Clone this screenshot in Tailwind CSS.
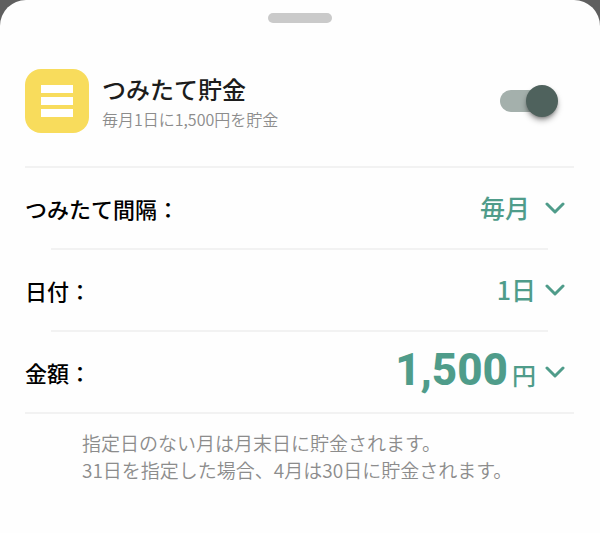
<!DOCTYPE html>
<html lang="ja">
<head>
  <meta charset="UTF-8" />
  <meta name="viewport" content="width=device-width, initial-scale=1.0" />
  <title>つみたて貯金</title>
  <script src="https://cdn.jsdelivr.net/npm/@tailwindcss/browser@4"></script>
</head>
<body class="bg-[#5f5f5f] font-['Noto_Sans_CJK_JP',sans-serif]">
  <main class="flex min-h-screen flex-col rounded-t-[26px] bg-[#fefefe] pt-[13px] pr-[26px] pl-[25px]">
    <!-- Drag handle -->
    <div class="h-[10px] w-16 self-center rounded-full bg-[#cacaca]"></div>

    <!-- Header -->
    <header class="flex items-center border-b-2 border-[#f2f2f2] pt-[46px] pb-[33px]">
      <svg class="size-16 shrink-0" viewBox="0 0 64 64" aria-hidden="true">
        <rect width="64" height="64" rx="16" fill="#f8dc5c" />
        <path d="M16 16h32v8H16zM16 28h32v8H16zM16 40h32v8H16z" fill="#fff" />
      </svg>
      <div class="ml-[13px] flex-1 pt-1">
        <h1 class="text-2xl/8 font-medium text-[#1c1c1c]"><label for="enabled">つみたて貯金</label></h1>
        <p class="text-base/7 font-[350] text-[#8c8c8c]">毎月1日に1,500円を貯金</p>
      </div>
      <span class="mr-4 grid items-center">
        <input id="enabled" type="checkbox" role="switch" checked
               class="peer col-start-1 row-start-1 h-[22px] w-[54px] cursor-pointer appearance-none rounded-full bg-[#d0d0d0] checked:bg-[#a4b0ac]" />
        <span class="pointer-events-none col-start-1 row-start-1 size-8 rounded-full bg-white shadow-md shadow-black/40 peer-checked:ml-[26px] peer-checked:bg-[#4f625d]"></span>
      </span>
    </header>

    <!-- Interval -->
    <div class="flex h-20 items-center justify-between pr-[9px]">
      <label for="interval" class="text-[22px] font-medium text-black">つみたて間隔：</label>
      <span class="grid items-center">
        <select id="interval" class="col-start-1 row-start-1 cursor-pointer appearance-none pr-[35px] text-right text-[25px] font-medium text-[#4f9c8a]">
          <option>毎月</option>
        </select>
        <svg class="pointer-events-none col-start-1 row-start-1 h-3 w-5 justify-self-end" viewBox="0 0 20 12" fill="none" stroke="#4f9c8a" stroke-width="3" stroke-linecap="round" stroke-linejoin="round" aria-hidden="true">
          <path d="M2 2 10 10 18 2" />
        </svg>
      </span>
    </div>
    <hr class="mx-[26px] border-t-2 border-[#f2f2f2]" />

    <!-- Day of month -->
    <div class="flex h-20 items-center justify-between pr-[9px]">
      <label for="day" class="text-[22px] font-medium text-black">日付：</label>
      <span class="grid items-center">
        <select id="day" class="col-start-1 row-start-1 cursor-pointer appearance-none pr-[29px] text-right text-[25px] font-medium text-[#4f9c8a]">
          <option>1日</option>
        </select>
        <svg class="pointer-events-none col-start-1 row-start-1 h-3 w-5 justify-self-end" viewBox="0 0 20 12" fill="none" stroke="#4f9c8a" stroke-width="3" stroke-linecap="round" stroke-linejoin="round" aria-hidden="true">
          <path d="M2 2 10 10 18 2" />
        </svg>
      </span>
    </div>
    <hr class="mx-[26px] border-t-2 border-[#f2f2f2]" />

    <!-- Amount -->
    <div class="flex h-[82px] items-center justify-between border-b-2 border-[#f2f2f2] pr-[9px]">
      <span id="amount-label" class="text-[22px] font-medium text-black">金額：</span>
      <button id="amount" type="button" aria-labelledby="amount-label amount" class="flex cursor-pointer items-center text-[#4f9c8a]">
        <span class="flex items-baseline gap-1 pb-1">
          <span class="font-[Roboto] text-[44px]/[54px] font-extrabold">1,500</span>
          <span class="text-2xl/8 font-medium">円</span>
        </span>
        <svg class="ml-[9px] h-3 w-5" viewBox="0 0 20 12" fill="none" stroke="#4f9c8a" stroke-width="3" stroke-linecap="round" stroke-linejoin="round" aria-hidden="true">
          <path d="M2 2 10 10 18 2" />
        </svg>
      </button>
    </div>

    <p class="pt-[15px] pl-[57px] text-[19px]/[27px] font-[350] text-[#8c8c8c]">
      指定日のない月は月末日に貯金されます。<br />
      31日を指定した場合、4月は30日に貯金されます。
    </p>
  </main>
</body>
</html>
